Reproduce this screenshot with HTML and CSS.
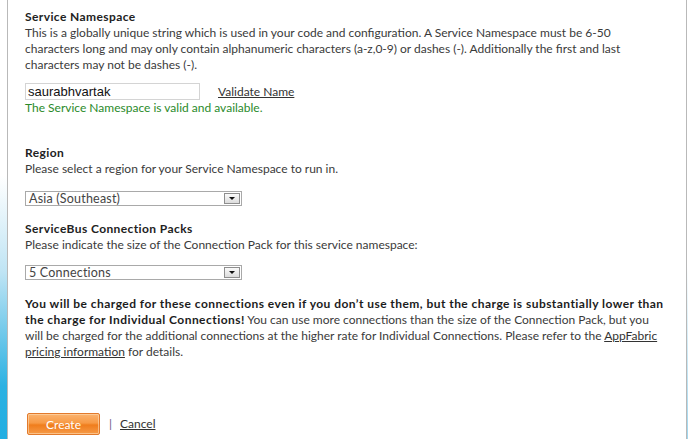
FILE: index.html
```html
<!DOCTYPE html>
<html lang="en">
<head>
<meta charset="utf-8">
<title>Create Service Namespace</title>
<link rel="stylesheet" href="styles.css">
</head>
<body>
<div class="frame">
  <div class="edge-left"></div>
  <main class="panel">
    <section class="field">
      <h3 class="field-title">Service Namespace</h3>
      <p class="field-desc">This is a globally unique string which is used in your code and configuration. A Service Namespace must be 6-50 characters long and may only contain alphanumeric characters (a-z,0-9) or dashes (-). Additionally the first and last characters may not be dashes (-).</p>
      <div class="name-row">
        <input class="name-input" type="text" value="saurabhvartak">
        <a class="link" href="#">Validate Name</a>
      </div>
      <p class="status-ok">The Service Namespace is valid and available.</p>
    </section>

    <section class="field field-region">
      <h3 class="field-title">Region</h3>
      <p class="field-desc">Please select a region for your Service Namespace to run in.</p>
      <div class="dropdown">
        <span class="dropdown-value">Asia (Southeast)</span>
        <span class="dropdown-btn"><span class="arrow"></span></span>
      </div>
    </section>

    <section class="field field-packs">
      <h3 class="field-title">ServiceBus Connection Packs</h3>
      <p class="field-desc">Please indicate the size of the Connection Pack for this service namespace:</p>
      <div class="dropdown">
        <span class="dropdown-value">5 Connections</span>
        <span class="dropdown-btn"><span class="arrow"></span></span>
      </div>
    </section>

    <p class="notice"><strong>You will be charged for these connections even if you don’t use them, but the charge is substantially lower than the charge for Individual Connections!</strong> You can use more connections than the size of the Connection Pack, but you will be charged for the additional connections at the higher rate for Individual Connections. Please refer to the <a class="link" href="#">AppFabric pricing information</a> for details.</p>

    <div class="actions">
      <button class="btn-create" type="button">Create</button>
      <span class="sep">|</span>
      <a class="link" href="#">Cancel</a>
    </div>
  </main>
  <div class="edge-right"></div>
</div>
</body>
</html>
```

FILE: styles.css
```css
* { box-sizing: border-box; }
html, body { margin: 0; padding: 0; background: #fff; }
body {
  font-family: Lato, "Open Sans", Arial, sans-serif;
  font-size: 12px;
  line-height: 16px;
  color: #3a3a3a;
}
.frame {
  display: flex;
  height: 439px;
  overflow: hidden;
}
.edge-left {
  width: 7px;
  flex: none;
  background: linear-gradient(to bottom, #ffffff 0%, #ffffff 40%, #bfe4f4 62%, #2cb1e2 88%, #22aee2 100%);
}
.panel {
  width: 680px;
  flex: none;
  border-left: 1px solid #b9b9b9;
  border-right: 1px solid #b9b9b9;
  padding: 9px 19px 0 17px;
  background: #fff;
}
.edge-right {
  flex: 1;
  background: linear-gradient(to bottom, #ffffff 0%, #ffffff 60%, #9fd6ee 100%);
}
.field-title {
  margin: 0;
  font-size: 12px;
  line-height: 16px;
  font-weight: 700;
  letter-spacing: 0.4px;
  color: #222;
}
.field-desc { margin: 0; }
.name-row {
  display: flex;
  align-items: center;
  gap: 18px;
  margin-top: 10px;
}
.name-input {
  width: 175px;
  height: 17px;
  border: 1px solid #d4d4d4;
  padding: 0 2px;
  margin: 0;
  font-family: "Liberation Sans", Arial, sans-serif;
  font-size: 13px;
  color: #111;
  outline: none;
}
.link {
  color: #333;
  text-decoration: underline;
}
.status-ok {
  margin: 0;
  color: #2a8a2a;
}
.field-region { margin-top: 29px; }
.field-packs { margin-top: 15px; }
.dropdown {
  display: flex;
  align-items: center;
  justify-content: space-between;
  width: 217px;
  height: 15px;
  margin-top: 14px;
  border: 1px solid #a9a9a9;
  padding: 0 1px 0 3px;
  color: #444;
  font-size: 12.5px;
  letter-spacing: 0.2px;
}
.field-packs .dropdown { margin-top: 12px; }
.dropdown-value { line-height: 13px; }
.dropdown-btn {
  width: 16px;
  height: 11px;
  border: 1px solid #8e8e8e;
  background: linear-gradient(to bottom, #fafafa, #dcdcdc);
  display: flex;
  align-items: center;
  justify-content: center;
}
.arrow {
  width: 0;
  height: 0;
  border-left: 3px solid transparent;
  border-right: 3px solid transparent;
  border-top: 3px solid #111;
}
.notice {
  margin: 16px 0 0 0;
}
.notice strong {
  color: #1c1c1c;
  letter-spacing: 0.45px;
}
.actions {
  display: flex;
  align-items: center;
  margin-top: 53px;
  padding-left: 2px;
}
.btn-create {
  width: 73px;
  height: 22px;
  border: 1px solid #e27a2c;
  border-radius: 2px;
  background: linear-gradient(to bottom, #fbb36f 0%, #f79a45 45%, #f07d1c 55%, #f59a48 100%);
  box-shadow: inset 0 0 0 1px rgba(255, 220, 180, 0.6);
  color: #fff;
  font-family: Lato, "Open Sans", Arial, sans-serif;
  font-size: 12px;
  padding: 0;
}
.sep {
  color: #6a5a8a;
  margin: 0 8px 0 9px;
}
```
